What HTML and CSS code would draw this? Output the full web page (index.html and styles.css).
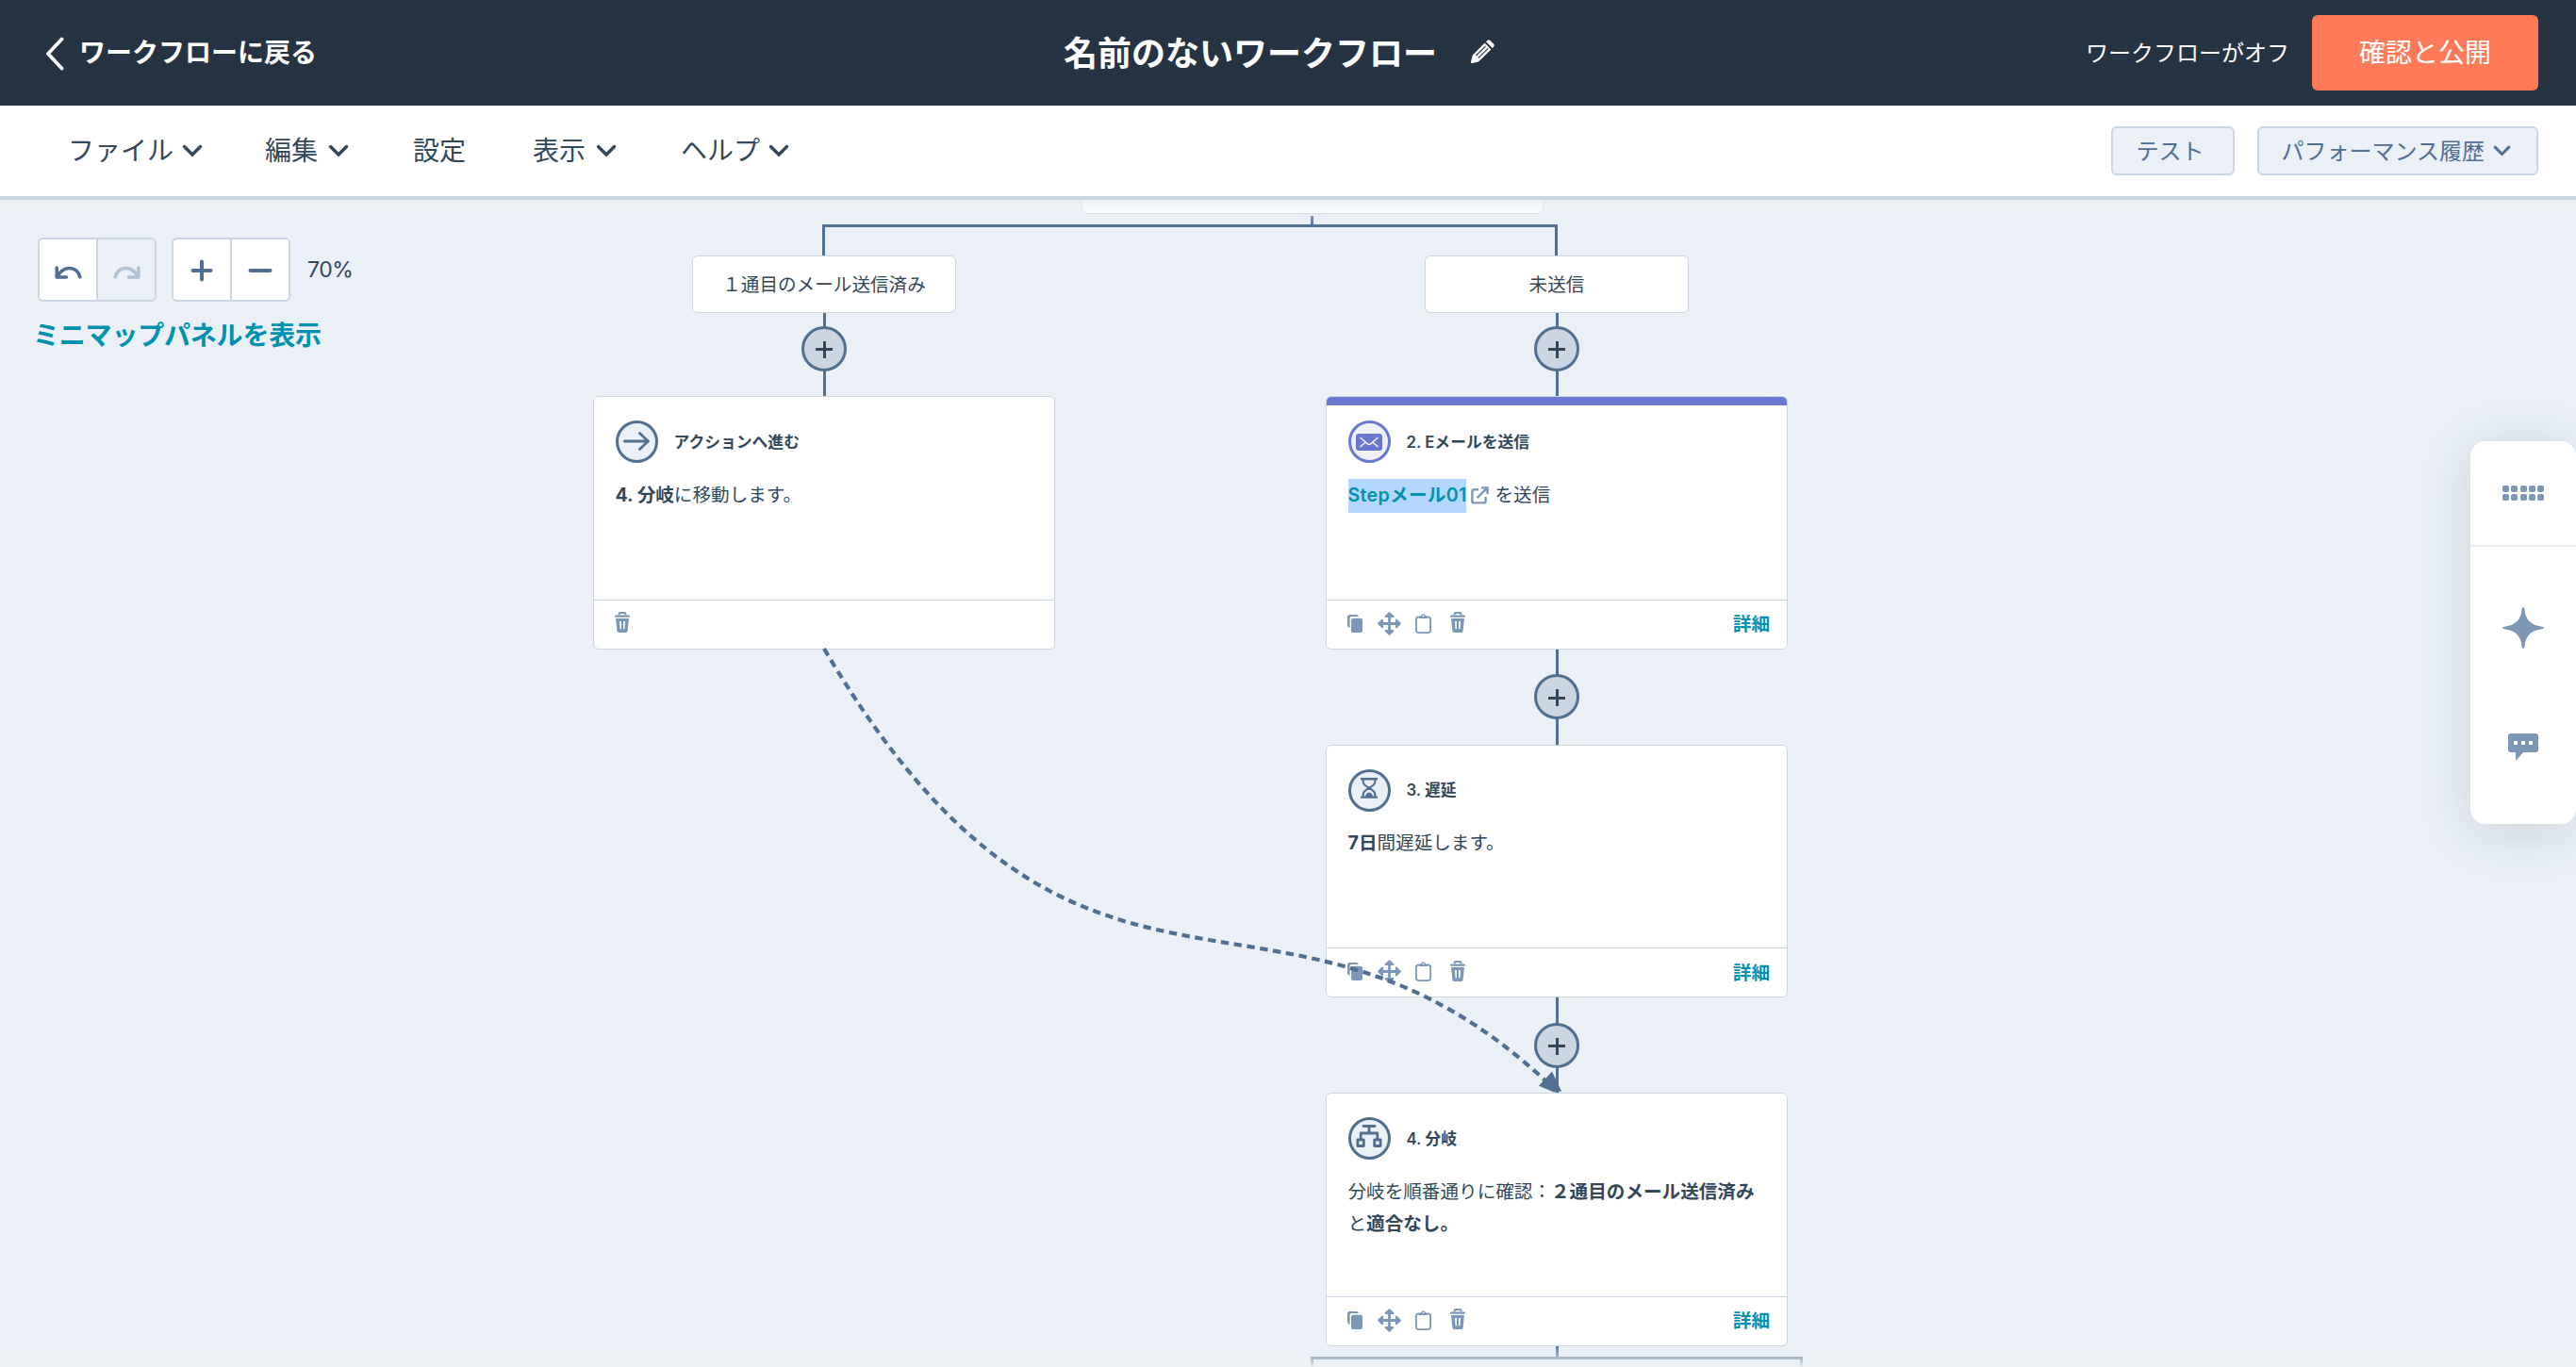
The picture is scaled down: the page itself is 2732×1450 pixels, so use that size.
FILE: index.html
```html
<!DOCTYPE html>
<html lang="ja">
<head>
    <meta charset="UTF-8">
    <meta name="viewport" content="width=device-width, initial-scale=1.0">
    <title>名前のないワークフロー</title>
    <link rel="stylesheet" href="styles.css">
</head>
<body>
    <!-- shared icons -->
    <svg class="sprite" width="0" height="0">
        <symbol id="i-chevron" viewBox="0 0 22 14"><path d="M2.5 2.5 L11 11 L19.5 2.5" fill="none" stroke="currentColor" stroke-width="3.4" stroke-linecap="round"/></symbol>
        <symbol id="i-undo" viewBox="0 0 29 14">
            <path d="M3 11.5 C8 0.5 23 -1.5 26.8 11.8" fill="none" stroke="currentColor" stroke-width="3.6" stroke-linecap="round"/>
            <path d="M2.2 2 V12 H12.4" fill="none" stroke="currentColor" stroke-width="3.6" stroke-linecap="round" stroke-linejoin="round"/>
        </symbol>
        <symbol id="i-trash" viewBox="0 0 16 22">
            <path d="M4.6 3.4 V1.8 Q4.6 1 5.6 1 H10.4 Q11.4 1 11.4 1.8 V3.4" fill="none" stroke="currentColor" stroke-width="2"/>
            <rect x="0" y="3.4" width="16" height="2.4" rx="1" fill="currentColor"/>
            <path fill="currentColor" fill-rule="evenodd" d="M1 7 H15 L13.6 20.2 Q13.4 22 11.8 22 H4.2 Q2.6 22 2.4 20.2 Z M5 10 L5.6 18.2 H7 V10 Z M9 10 V18.2 H10.4 L11 10 Z"/>
        </symbol>
        <symbol id="i-copy" viewBox="0 0 16.4 19">
            <path d="M0 2.5 Q0 0 2.5 0 H9.5 Q11.6 0 12 2 H4.5 Q2.6 2 2.6 4 V14 Q0 13.6 0 11 Z" fill="currentColor"/>
            <rect x="4" y="3.8" width="12.2" height="15.2" rx="2.6" fill="currentColor"/>
        </symbol>
        <symbol id="i-move" viewBox="0 0 25 25">
            <path d="M12.5 3 V22 M3 12.5 H22" stroke="currentColor" stroke-width="2.8"/>
            <path d="M8.6 5 L12.5 1.2 L16.4 5 Z M8.6 20 L12.5 23.8 L16.4 20 Z M5 8.6 L1.2 12.5 L5 16.4 Z M20 8.6 L23.8 12.5 L20 16.4 Z" fill="currentColor" stroke="currentColor" stroke-width="2" stroke-linejoin="round"/>
        </symbol>
        <symbol id="i-paste" viewBox="0 0 17 21">
            <rect x=".9" y="3.3" width="15.2" height="16.8" rx="2.8" fill="none" stroke="currentColor" stroke-width="1.8"/>
            <path d="M3.8 5 Q4 2.8 6 2.6 Q6.6 .3 8.5 .3 Q10.4 .3 11 2.6 Q13 2.8 13.2 5 Z" fill="currentColor"/>
            <circle cx="8.5" cy="2.3" r=".9" fill="#fff"/>
        </symbol>
    </svg>

    <header class="topbar">
        <a class="back">
            <svg width="20" height="36" viewBox="0 0 20 36"><path d="M17.5 2.5 L3 18 L17.5 33.5" fill="none" stroke="#fff" stroke-width="3.8" stroke-linecap="round" stroke-linejoin="round"/></svg>
            <span>ワークフローに戻る</span>
        </a>
        <div class="title">
            <h1>名前のないワークフロー</h1>
            <svg width="25" height="25" viewBox="0 0 25 25">
                <path d="M14.6 3.6 L21.4 10.4 L8 23.4 L1.4 25 Q-.2 25 0 23.6 L1.8 16.4 Z" fill="#fff"/>
                <path d="M16 2.2 L17.4 .9 Q18.8 -.4 20.4 .9 L24 4.4 Q25.4 6 24.2 7.4 L22.8 9 Z" fill="#fff"/>
                <path d="M5.4 17 L15.6 6.9 M8 19.4 L18.1 9.4" stroke="#253342" stroke-width="1.1"/>
            </svg>
        </div>
        <div class="publish">
            <span>ワークフローがオフ</span>
            <button class="publish-btn">確認と公開</button>
        </div>
    </header>

    <nav class="menubar">
        <ul class="menu">
            <li>ファイル<svg class="chev"><use href="#i-chevron"/></svg></li>
            <li>編集<svg class="chev"><use href="#i-chevron"/></svg></li>
            <li>設定</li>
            <li>表示<svg class="chev"><use href="#i-chevron"/></svg></li>
            <li>ヘルプ<svg class="chev"><use href="#i-chevron"/></svg></li>
        </ul>
        <div class="menu-actions">
            <button class="sub-btn test-btn">テスト</button>
            <button class="sub-btn">パフォーマンス履歴<svg class="chev small"><use href="#i-chevron"/></svg></button>
        </div>
    </nav>

    <main class="canvas">
        <!-- branch above, scrolled out of view -->
        <div class="card-above"></div>
        <div class="fork fork-top"></div>

        <section class="branch branch-left">
            <div class="pill">１通目のメール送信済み</div>
            <div class="link first"><span class="add"></span></div>
            <article class="card">
                <div class="card-body">
                    <div class="card-head">
                        <span class="badge"><svg width="28" height="20" viewBox="0 0 28 20"><path d="M1.4 10 H26 M17.4 1.6 L26.4 10 L17.4 18.4" fill="none" stroke="currentColor" stroke-width="2.8" stroke-linecap="round" stroke-linejoin="round"/></svg></span>
                        <h2>アクションへ進む</h2>
                    </div>
                    <p><b>4. 分岐</b>に移動します。</p>
                </div>
                <div class="card-foot">
                    <svg class="i-trash"><use href="#i-trash"/></svg>
                </div>
            </article>
        </section>

        <section class="branch branch-right">
            <div class="pill">未送信</div>
            <div class="link first"><span class="add"></span></div>
            <article class="card email">
                <div class="card-body">
                    <div class="card-head">
                        <span class="badge"><svg width="28" height="18" viewBox="0 0 28 18"><rect width="28" height="18" rx="3" fill="currentColor"/><path d="M4.5 4 L12 10.6 Q14 12 16 10.6 L23.5 4 M4.5 14 L9.6 9.6 M23.5 14 L18.4 9.6" fill="none" stroke="#f0f0fa" stroke-width="1.5"/></svg></span>
                        <h2>2. Eメールを送信</h2>
                    </div>
                    <p><a class="picked">Stepメール01</a><svg class="ext" viewBox="0 0 19 19"><path d="M8 3.2 H3.4 Q1.4 3.2 1.4 5.2 V15.4 Q1.4 17.4 3.4 17.4 H13.6 Q15.6 17.4 15.6 15.4 V11" fill="none" stroke="currentColor" stroke-width="2.4"/><path d="M6.6 12.2 L16.6 2.2 M11 1.4 H17.6 V8" fill="none" stroke="currentColor" stroke-width="2.4"/></svg>を送信</p>
                </div>
                <div class="card-foot">
                    <svg class="i-copy"><use href="#i-copy"/></svg>
                    <svg class="i-move"><use href="#i-move"/></svg>
                    <svg class="i-paste"><use href="#i-paste"/></svg>
                    <svg class="i-trash"><use href="#i-trash"/></svg>
                    <a>詳細</a>
                </div>
            </article>
            <div class="link"><span class="add"></span></div>
            <article class="card">
                <div class="card-body">
                    <div class="card-head">
                        <span class="badge raised"><svg width="18" height="22" viewBox="0 0 18 22"><path d="M0 1.2 H18 M0 20.6 H18" stroke="currentColor" stroke-width="2.4"/><path d="M2.8 1.5 V5 Q3 7.4 9 10.8 Q15 7.4 15.2 5 V1.5 M2.8 20.5 V17 Q3 14.4 9 10.8 Q15 14.4 15.2 17 V20.5" fill="none" stroke="currentColor" stroke-width="2.2"/><path d="M5 20.5 Q5.4 15.6 9 15.4 Q12.6 15.6 13 20.5 Z" fill="currentColor"/></svg></span>
                        <h2>3. 遅延</h2>
                    </div>
                    <p><b>7日</b>間遅延します。</p>
                </div>
                <div class="card-foot">
                    <svg class="i-copy"><use href="#i-copy"/></svg>
                    <svg class="i-move"><use href="#i-move"/></svg>
                    <svg class="i-paste"><use href="#i-paste"/></svg>
                    <svg class="i-trash"><use href="#i-trash"/></svg>
                    <a>詳細</a>
                </div>
            </article>
            <div class="link"><span class="add"></span></div>
            <article class="card">
                <div class="card-body">
                    <div class="card-head">
                        <span class="badge raised"><svg width="28" height="24" viewBox="0 0 28 24"><path d="M8 1.5 H20 M14 1.5 V9 M5.2 16 V9 H22.8 V16" fill="none" stroke="currentColor" stroke-width="2.8" stroke-linecap="round" stroke-linejoin="round"/><rect x="1.9" y="15.9" width="6.4" height="6.6" fill="none" stroke="currentColor" stroke-width="2.8" stroke-linejoin="round"/><rect x="19.7" y="15.9" width="6.4" height="6.6" fill="none" stroke="currentColor" stroke-width="2.8" stroke-linejoin="round"/></svg></span>
                        <h2>4. 分岐</h2>
                    </div>
                    <p>分岐を順番通りに確認：<b>２通目のメール送信済み</b><br>と<b>適合なし。</b></p>
                </div>
                <div class="card-foot">
                    <svg class="i-copy"><use href="#i-copy"/></svg>
                    <svg class="i-move"><use href="#i-move"/></svg>
                    <svg class="i-paste"><use href="#i-paste"/></svg>
                    <svg class="i-trash"><use href="#i-trash"/></svg>
                    <a>詳細</a>
                </div>
            </article>
            <div class="link last"></div>
        </section>
        <div class="fork fork-bottom"></div>

        <!-- "go to action" jump line -->
        <svg class="jump" width="2732" height="1238" viewBox="0 212 2732 1238">
            <path d="M874 688 C1147 1152 1358 880 1644 1151" fill="none" stroke="#516f90" stroke-width="4.2" stroke-dasharray="8.4 5.6"/>
            <path d="M1646 1136.5 L1632 1151.8 L1648 1158.5 L1656 1157.5 Z" fill="#516f90"/>
        </svg>

        <div class="edge-fade"></div>

        <div class="tools">
            <div class="tool-row">
                <div class="tool-group">
                    <button><svg class="i-undo"><use href="#i-undo"/></svg></button>
                    <button class="off"><svg class="i-undo flip"><use href="#i-undo"/></svg></button>
                </div>
                <div class="tool-group">
                    <button><svg width="26" height="26" viewBox="0 0 26 26"><path d="M13 4.5 V23.5 M3.5 14 H22.5" stroke="currentColor" stroke-width="4" stroke-linecap="round"/></svg></button>
                    <button><svg width="26" height="26" viewBox="0 0 26 26"><path d="M2.5 14 H23.5" stroke="currentColor" stroke-width="4" stroke-linecap="round"/></svg></button>
                </div>
                <span class="zoom-level">70%</span>
            </div>
            <a class="minimap">ミニマップパネルを表示</a>
        </div>

        <aside class="dock">
            <div class="dock-grip">
                <i></i><i></i><i></i><i></i><i></i>
                <i></i><i></i><i></i><i></i><i></i>
            </div>
            <div class="dock-items">
                <svg width="44" height="44" viewBox="0 0 44 44"><path d="M22 0 Q23.4 0 23.6 3 Q25 18.6 41 20.4 Q44 20.6 44 22 Q44 23.4 41 23.6 Q25 25.4 23.6 41 Q23.4 44 22 44 Q20.6 44 20.4 41 Q19 25.4 3 23.6 Q0 23.4 0 22 Q0 20.6 3 20.4 Q19 18.6 20.4 3 Q20.6 0 22 0 Z" fill="currentColor"/></svg>
                <svg width="32" height="28" viewBox="0 0 32 28"><path d="M3 0 H29 Q32 0 32 3 V17 Q32 20 29 20 H16 L9.6 27.4 Q8 28.6 8 27 V20 H3 Q0 20 0 17 V3 Q0 0 3 0 Z" fill="currentColor"/><path d="M6 8 h4 v4 h-4 Z M14 8 h4 v4 h-4 Z M22 8 h4 v4 h-4 Z" fill="#fff"/></svg>
            </div>
        </aside>
    </main>
</body>
</html>
```
FILE: styles.css
```css
* {
    box-sizing: border-box;
}
body {
    margin: 0;
    height: 1450px;
    overflow: hidden;
    font-family: Inter, "Noto Sans CJK JP", sans-serif;
    color: #33475b;
    background: #eaf0f6;
}
h1, h2, p, ul {
    margin: 0;
    padding: 0;
}
button {
    font-family: inherit;
    padding: 0;
}
.sprite {
    position: absolute;
}

/* top bar */
.topbar {
    height: 112px;
    padding: 0 40px 0 48px;
    display: grid;
    grid-template-columns: 1fr auto 1fr;
    align-items: center;
    background: #253342;
    color: #fff;
}
.back {
    display: flex;
    align-items: center;
    gap: 16px;
    font-size: 28px;
    font-weight: 600;
}
.back svg {
    margin-top: 2px;
}
.back span, .publish span {
    padding-bottom: 4px;
}
.title {
    display: flex;
    align-items: center;
    gap: 36px;
    margin-right: 27px;
}
.title h1 {
    padding-bottom: 5px;
    font-size: 36px;
    font-weight: 600;
}
.title svg {
    margin-top: -3px;
}
.publish {
    display: flex;
    justify-content: flex-end;
    align-items: center;
    gap: 24px;
    font-size: 24px;
}
.publish-btn {
    width: 240px;
    height: 80px;
    padding-bottom: 4px;
    border: none;
    border-radius: 6px;
    background: #ff7a59;
    color: #fff;
    font-size: 28px;
}

/* menu bar */
.menubar {
    height: 100px;
    padding: 0 40px 0 72px;
    display: flex;
    justify-content: space-between;
    align-items: center;
    background: #fff;
    border-bottom: 4px solid #cbd6e2;
}
.menu {
    display: flex;
    gap: 68px;
    padding-bottom: 4px;
    list-style: none;
    font-size: 28px;
}
.menu li {
    display: flex;
    align-items: center;
}
.menu li:first-child {
    margin-right: -2px;
}
.menu li:nth-child(3) {
    margin-right: 3px;
}
.chev {
    width: 22px;
    height: 14px;
    margin: 3px 0 0 11px;
}
.menu li:first-child .chev, .menu li:last-child .chev {
    margin-left: 9px;
}
.chev.small {
    width: 19px;
    height: 12px;
    margin-left: 9px;
}
.menu-actions {
    display: flex;
    gap: 24px;
}
.sub-btn {
    display: flex;
    align-items: center;
    height: 52px;
    padding: 0 27px 4px 23px;
    border: 2px solid #cbd6e2;
    border-radius: 6px;
    background: #eaf0f6;
    color: #506e91;
    font-size: 24px;
}
.test-btn {
    width: 131px;
    padding-left: 24px;
}

/* canvas */
.canvas {
    position: relative;
    height: 1238px;
    overflow: hidden;
}
.card-above {
    position: absolute;
    left: 1147px;
    top: -40px;
    width: 490px;
    height: 54.5px;
    background: #fff;
    border: 1.4px solid #cbd6e2;
    border-radius: 6px;
}
.fork {
    position: absolute;
    border: 3px solid #516f90;
    border-bottom: none;
}
.fork-top {
    left: 872px;
    top: 25.5px;
    width: 780px;
    height: 34px;
}
.fork-top::before {
    content: "";
    position: absolute;
    left: 515px;
    top: -12px;
    width: 3px;
    height: 12px;
    background: #516f90;
}
.fork-bottom {
    left: 1390px;
    top: 1227px;
    width: 522px;
    height: 20px;
}
.branch {
    position: absolute;
    top: 59px;
    width: 490px;
    display: flex;
    flex-direction: column;
    align-items: center;
}
.branch-left {
    left: 629px;
}
.branch-right {
    left: 1406px;
}
.pill {
    width: 280px;
    height: 60.5px;
    padding-bottom: 2px;
    display: flex;
    align-items: center;
    justify-content: center;
    background: #fff;
    border: 1.6px solid #cbd6e2;
    border-radius: 6px;
    font-size: 19.6px;
}
.link {
    width: 3px;
    height: 101.2px;
    padding-top: 26.5px;
    display: flex;
    justify-content: center;
    background: #516f90;
}
.link.first {
    height: 88.5px;
    padding-top: 14px;
}
.link.last {
    height: 13px;
    padding-top: 0;
}
.add {
    flex: none;
    width: 48px;
    height: 48px;
    border: 3px solid #516f90;
    border-radius: 50%;
    background:
        linear-gradient(#33475b, #33475b) 50% calc(50% + 1px) / 18px 3px no-repeat,
        linear-gradient(#33475b, #33475b) 50% calc(50% + 1px) / 3px 18px no-repeat,
        #cbd6e2;
}
.card {
    width: 490px;
    height: 268.5px;
    display: flex;
    flex-direction: column;
    background: #fff;
    border: 1.6px solid #cbd6e2;
    border-radius: 6px;
}
.card.email {
    background: linear-gradient(#6a78d1, #6a78d1) 0 0 / 100% 9px no-repeat, #fff;
}
.card-body {
    flex: 1;
    padding: 25px 20px 0 22.5px;
    font-size: 19.6px;
    line-height: 34.3px;
}
.card-head {
    display: flex;
    align-items: center;
    gap: 17px;
    margin-bottom: 16.5px;
}
.card-head h2 {
    font-size: 16.8px;
    line-height: 24px;
    font-weight: 600;
}
.badge {
    width: 45px;
    height: 45px;
    display: flex;
    align-items: center;
    justify-content: center;
    border: 3px solid #516f90;
    border-radius: 50%;
    background: #eaf0f6;
    color: #516f90;
}
.badge svg {
    flex: none;
    margin-top: -2px;
}
.badge.raised svg {
    margin-top: -5px;
}
.email .badge {
    border-color: #6a78d1;
    background: #f0f0fa;
    color: #6a78d1;
}
.email .badge svg {
    margin-top: 0;
}
.picked {
    display: inline-block;
    height: 36px;
    background: #b3d7ff;
    color: #0091ae;
    font-weight: 600;
    letter-spacing: .3px;
}
.ext {
    width: 19px;
    height: 19px;
    margin: 0 6px 0 5px;
    vertical-align: -3px;
    color: #7c98b6;
}
.card-foot {
    height: 52px;
    padding: 0 18px 2px 22px;
    display: flex;
    align-items: center;
    border-top: 1.4px solid #cbd6e2;
    color: #7c98b6;
}
.card-foot a {
    margin-left: auto;
    padding-bottom: 1px;
    color: #0091ae;
    font-size: 19.6px;
    font-weight: 600;
}
.i-copy {
    width: 16.4px;
    height: 19px;
}
.i-move {
    width: 25px;
    height: 25px;
    margin: 0 15px 0 15.6px;
}
.i-paste {
    width: 17px;
    height: 21px;
    margin-right: 20px;
}
.i-trash {
    width: 16px;
    height: 22px;
    margin-top: -2px;
}
.jump {
    position: absolute;
    left: 0;
    top: 0;
}
.edge-fade {
    position: absolute;
    inset: 0;
    background:
        linear-gradient(rgba(234, 240, 243, .75), rgba(234, 240, 243, 0)) top / 100% 28px no-repeat,
        linear-gradient(rgba(234, 240, 243, 0), rgba(234, 240, 243, .95)) bottom / 100% 24px no-repeat;
}

/* zoom and history controls */
.tools {
    position: absolute;
    left: 40px;
    top: 40px;
}
.tool-row {
    display: flex;
    align-items: center;
    gap: 16px;
}
.tool-group {
    display: flex;
    height: 68px;
    border: 2px solid #cbd6e2;
    border-radius: 6px;
    overflow: hidden;
}
.tool-group button {
    width: 60px;
    display: flex;
    align-items: center;
    justify-content: center;
    border: none;
    background: #fff;
    color: #506e91;
}
.tool-group button + button {
    width: 62px;
    border-left: 2px solid #cbd6e2;
}
.tool-group button.off {
    background: #eaf0f6;
    color: #b0c1d4;
}
.i-undo {
    width: 29px;
    height: 14px;
    margin-top: 6px;
}
.i-undo.flip {
    transform: scaleX(-1);
}
.zoom-level {
    margin-left: 2px;
    font-size: 23px;
    letter-spacing: -.5px;
}
.minimap {
    display: block;
    margin: 14px 0 0 -5px;
    color: #0091ae;
    font-size: 28px;
    font-weight: 600;
    letter-spacing: -.2px;
}

/* floating dock on the right */
.dock {
    position: absolute;
    left: 2620px;
    top: 256px;
    width: 112px;
    height: 406px;
    background: #fff;
    border-radius: 16px;
    box-shadow: 0 8px 60px rgba(45, 62, 80, .16);
    color: #7c98b6;
}
.dock-grip {
    height: 112px;
    padding: 47px 34px 0;
    display: grid;
    grid-template-columns: repeat(5, 7px);
    grid-auto-rows: 7px;
    gap: 2.25px;
    border-bottom: 2px solid #eaf0f6;
}
.dock-grip i {
    border-radius: 2px;
    background: #7c98b6;
}
.dock-items {
    display: flex;
    flex-direction: column;
    align-items: center;
    gap: 90px;
    padding-top: 64px;
}
```
